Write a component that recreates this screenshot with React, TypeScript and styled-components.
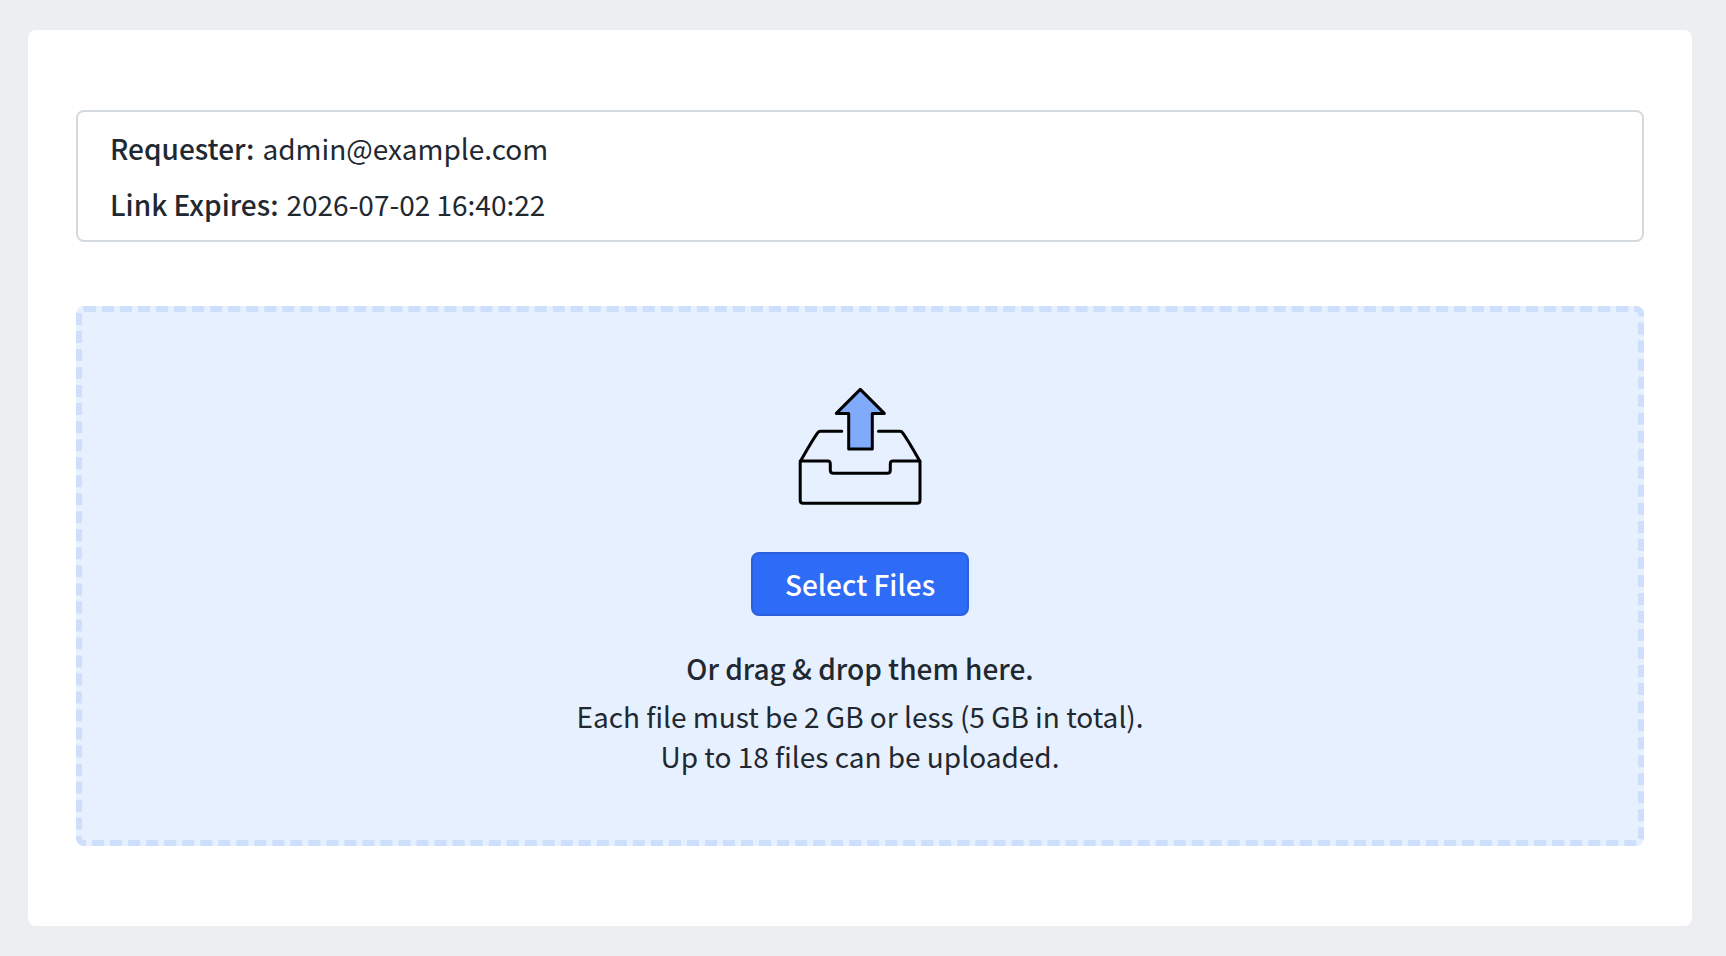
import React from "react";
import styled, { createGlobalStyle } from "styled-components";

const GlobalStyle = createGlobalStyle`
  *, *::before, *::after {
    box-sizing: border-box;
  }

  body {
    margin: 0;
    background: #edeef2;
    color: #212830;
    font-family: "Noto Sans CJK SC", "Noto Sans", sans-serif;
    font-size: 28px;
    line-height: 40px;
  }
`;

const Card = styled.main`
  margin: 30px 34px 30px 28px;
  padding: 80px 48px;
  border-radius: 8px;
  background: #ffffff;
`;

const Details = styled.dl`
  display: flex;
  flex-direction: column;
  gap: 16px;
  margin: 0 0 64px;
  padding: 16px 32px;
  border: 2px solid #d5d9e0;
  border-radius: 8px;
`;

const DetailRow = styled.div`
  display: flex;
  gap: 8px;
`;

const DetailLabel = styled.dt`
  font-weight: 500;
`;

const DetailValue = styled.dd`
  margin: 0;
`;

const DropZone = styled.section`
  display: flex;
  flex-direction: column;
  align-items: center;
  padding: 64px 32px;
  border: 6px dashed #cedffb;
  border-radius: 8px;
  background: #e6f0ff;
  text-align: center;
`;

const TrayIcon = styled.svg`
  display: block;
  width: 144px;
  height: 144px;
`;

const SelectButton = styled.button`
  margin: 32px 0;
  padding: 10px 32px;
  border: 2px solid #2b60dc;
  border-radius: 8px;
  background: #2e6bf6;
  color: #ffffff;
  font: inherit;
  font-weight: 500;
  cursor: pointer;
`;

const Prompt = styled.p`
  margin: 0 0 8px;
  font-weight: 500;
`;

const Limit = styled.p`
  margin: 0;
`;

const details = [
  { label: "Requester:", value: "admin@example.com" },
  { label: "Link Expires:", value: "2026-07-02 16:40:22" },
];

function UploadTray() {
  return (
    <TrayIcon
      viewBox="0 0 144 144"
      fill="none"
      stroke="#000000"
      strokeWidth="3"
      strokeLinecap="round"
      strokeLinejoin="round"
      aria-hidden="true"
    >
      <path d="M53.8 55.3H32.6c-1.4 0-2.4.6-3.2 1.8C23.5 65.5 18 75.5 12.6 84.9" />
      <path d="M90.5 55.3h21.2c1.4 0 2.4.6 3.2 1.8 5.9 8.4 11.4 18.4 16.8 27.8" />
      <path d="M12.2 84.9h27.4c1.8 0 2.7 1 2.7 2.8v6.5c0 1.8 1.4 3 3.2 3h53.6c1.8 0 3.2-1.2 3.2-3v-6.5c0-1.8.9-2.8 2.7-2.8H132v39.3c0 1.8-1.2 3-3 3H15.2c-1.8 0-3-1.2-3-3z" />
      <path
        d="M72.3 13.4L48.3 37.4h12.4V73h23.6V37.4h12z"
        fill="#80abfa"
      />
    </TrayIcon>
  );
}

export default function App() {
  return (
    <>
      <GlobalStyle />
      <Card>
        <Details>
          {details.map(({ label, value }) => (
            <DetailRow key={label}>
              <DetailLabel>{label}</DetailLabel>
              <DetailValue>{value}</DetailValue>
            </DetailRow>
          ))}
        </Details>
        <DropZone>
          <UploadTray />
          <SelectButton type="button">Select Files</SelectButton>
          <Prompt>Or drag &amp; drop them here.</Prompt>
          <Limit>Each file must be 2 GB or less (5 GB in total).</Limit>
          <Limit>Up to 18 files can be uploaded.</Limit>
        </DropZone>
      </Card>
    </>
  );
}
